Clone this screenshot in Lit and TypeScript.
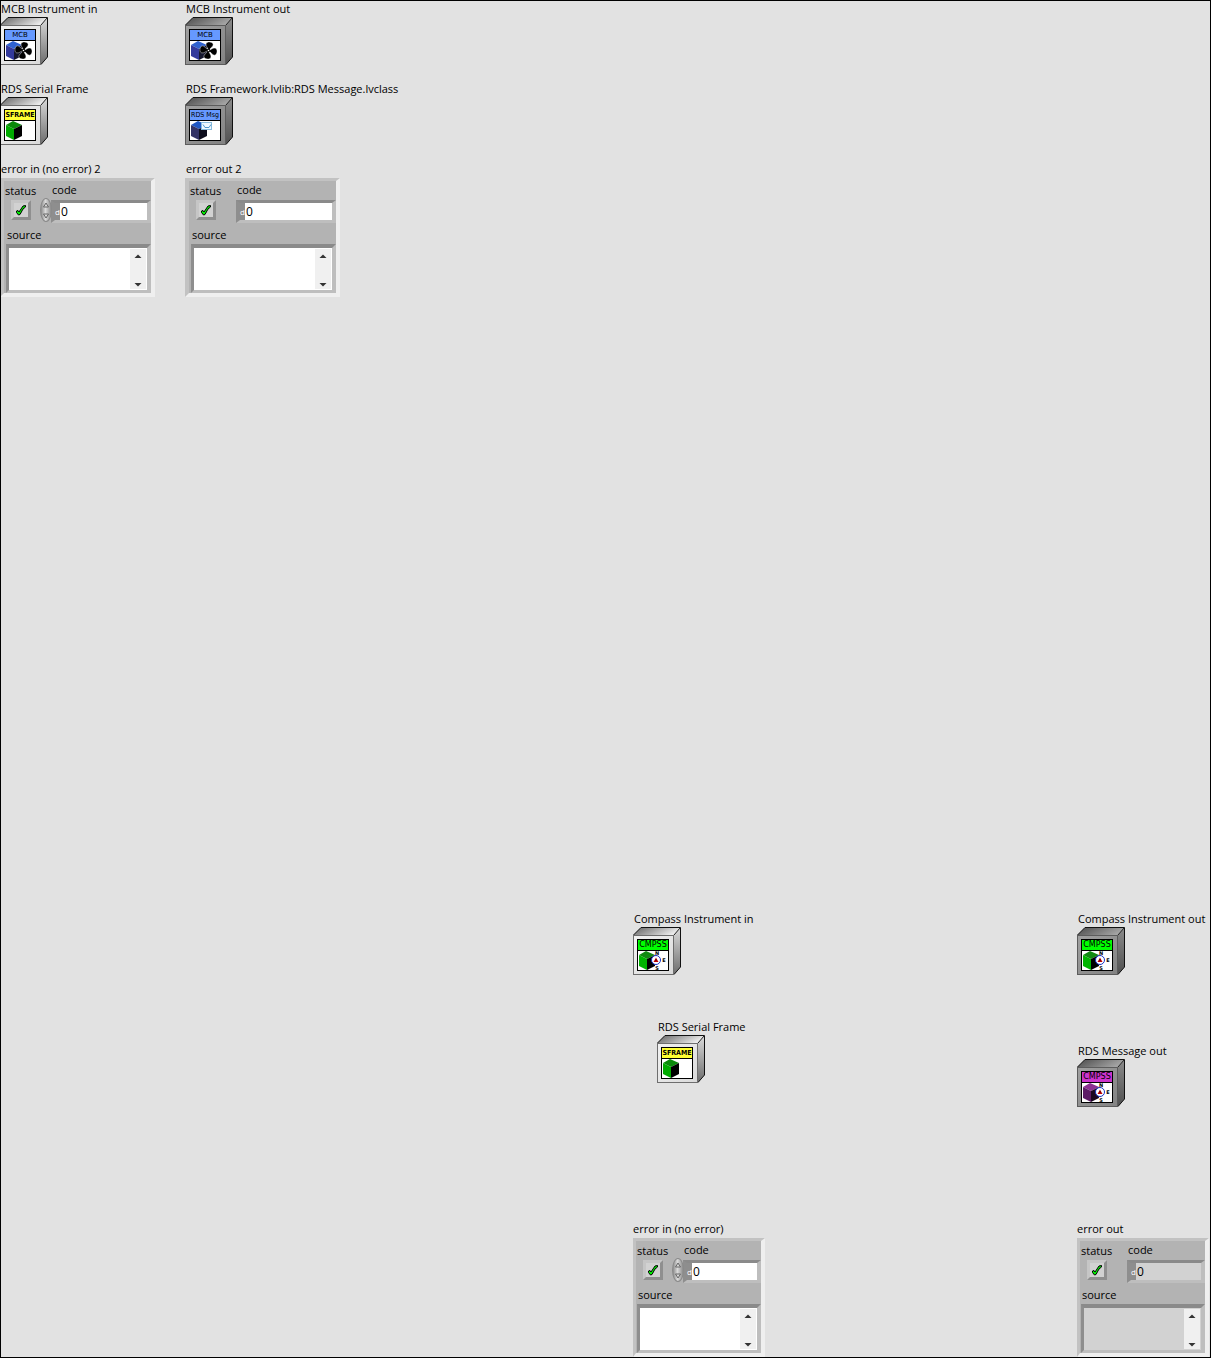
import { LitElement, html, svg, css, nothing } from "lit";
import { customElement, property } from "lit/decorators.js";

type Emblem = "fan" | "mail" | "compass" | "none";

interface ClassKind {
  tag: string;
  font: string;
  header: string;
  top: string;
  left: string;
  right: string;
  emblem: Emblem;
}

const KINDS: Record<string, ClassKind> = {
  mcb: { tag: "MCB", font: "plain", header: "#6699ff", top: "#2f62d0", left: "#333a9c", right: "#15172e", emblem: "fan" },
  sframe: { tag: "SFRAME", font: "narrow heavy", header: "#ffff33", top: "#0b8a0b", left: "#00ab00", right: "#000000", emblem: "none" },
  message: { tag: "RDS Msg", font: "narrow", header: "#6699ff", top: "#1f57c4", left: "#333366", right: "#0d0d1c", emblem: "mail" },
  compass: { tag: "CMPSS", font: "wide", header: "#00ff00", top: "#128a12", left: "#00b400", right: "#000000", emblem: "compass" },
  reply: { tag: "CMPSS", font: "wide", header: "#cc33cc", top: "#8d2f93", left: "#5c1c66", right: "#1a0620", emblem: "compass" },
};

/** Isometric box holding a 32x32 class icon. */
@customElement("class-object")
export class ClassObject extends LitElement {
  @property() name = "";
  @property() kind = "mcb";
  @property({ type: Boolean }) indicator = false;

  static styles = css`
    :host { display: block; }
    .name { padding-left: 1px; height: 16px; line-height: 16px; white-space: nowrap; }
    .icon { display: block; width: 48px; height: 48px; }
    .tag { font-family: "DejaVu Sans", sans-serif; font-size: 7px; text-anchor: middle; }
    .narrow { font-family: "DejaVu Sans Condensed", "DejaVu Sans", sans-serif; }
    .wide { font-size: 8px; }
    .heavy { font-weight: bold; }
    .point { font-family: "DejaVu Sans", sans-serif; font-size: 5px; font-weight: bold; text-anchor: middle; }
  `;

  private emblem(e: Emblem) {
    if (e === "fan") {
      return svg`
        ${[10, 100, 190, 280].map(a => svg`
          <path transform="rotate(${a} 23.500 33.500)" fill="#000" stroke="#fff" stroke-width="0.400"
            d="M23.500 33.500C22.500 31 19.500 29.500 20 27C20.500 24.500 26 24 27 26.500C27.500 29 25 30.500 23.500 33.500Z"/>`)}
        <circle cx="23.500" cy="33.500" r="1.800" fill="#000"/>
        <circle cx="23.500" cy="33.500" r="0.800" fill="#fff"/>`;
    }
    if (e === "mail") {
      return svg`
        <rect x="16.500" y="25.500" width="10" height="7" fill="#eef8ff" stroke="#88bbdd"/>
        <path d="M18 27.500L20 30.500H24L26 27.500" fill="none" stroke="#4f95c8"/>`;
    }
    if (e === "compass") {
      return svg`
        <circle cx="23" cy="33" r="4.500" fill="#fff" stroke="#1230c8"/>
        <path d="M23 30.500L25.500 35H20.500Z" fill="#c00000"/>
        <path d="M23 32V34" stroke="#500"/>
        <text class="point" x="24" y="28">N</text>
        <text class="point" x="31" y="35">E</text>
        <text class="point" x="24" y="43">S</text>`;
    }
    return nothing;
  }

  render() {
    const k = KINDS[this.kind];
    const face = this.indicator ? ["#a0a0a0", "#828282"] : ["#f2f2f2", "#dadada"];
    const edge = this.indicator ? "#5c5c5c" : "#6e6e6e";
    return html`
      <div class="name">${this.name}</div>
      <svg class="icon" viewBox="0 0 48 48" role="img" aria-label=${this.name}>
        <defs>
          <linearGradient id="roof" x1="0" y1="0" x2="1" y2="0.300">
            <stop offset="0" stop-color=${this.indicator ? "#4a4a4a" : "#606060"}/>
            <stop offset="1" stop-color=${this.indicator ? "#a4a4a4" : "#ececec"}/>
          </linearGradient>
          <linearGradient id="side" x1="0" y1="0" x2="0" y2="1">
            <stop offset="0" stop-color=${this.indicator ? "#8c8c8c" : "#dcdcdc"}/>
            <stop offset="1" stop-color=${this.indicator ? "#505050" : "#6c6c6c"}/>
          </linearGradient>
          <linearGradient id="face" x1="0" y1="0" x2="1" y2="1">
            <stop offset="0" stop-color=${face[0]}/>
            <stop offset="1" stop-color=${face[1]}/>
          </linearGradient>
        </defs>
        <path d="M0.500 8L8 0.500H47.500L41 8Z" fill="url(#roof)"/>
        <path d="M41 8L47.500 0.500V40L41 47.500Z" fill="url(#side)"/>
        <path d="M0.500 8L8 0.500H47.500V40L41 47.500" fill="none" stroke="#111"/>
        <rect x="0.500" y="8.500" width="40" height="39" fill="url(#face)" stroke=${edge}/>
        <path d="M41 8L47 1" stroke="#222"/>
        <rect x="4.500" y="12.500" width="31" height="31" fill="#fff" stroke="#000"/>
        <rect x="5" y="13" width="30" height="10" fill=${k.header}/>
        <rect x="5" y="23" width="30" height="1" fill="#000"/>
        <text class="tag ${k.font}" x="20" y="20">${k.tag}</text>
        <path d="M13 24L22 28L14 32L6 28Z" fill=${k.top}/>
        <path d="M6 28L14 32V43L6 39Z" fill=${k.left}/>
        <path d="M14 32L22 28V39L14 43Z" fill=${k.right}/>
        ${this.emblem(k.emblem)}
      </svg>
    `;
  }
}

/** Error cluster with status, code and source fields. */
@customElement("error-cluster")
export class ErrorCluster extends LitElement {
  @property() name = "";
  @property({ type: Boolean }) indicator = false;
  @property({ type: Boolean }) dimmed = false;
  @property({ type: Boolean }) compact = false;

  static styles = css`
    :host { display: block; }
    * { box-sizing: border-box; }
    button, input, textarea { font: inherit; color: inherit; margin: 0; padding: 0; border: 0; border-radius: 0; outline: 0; background: none; }
    .name { padding-left: 1px; height: 16px; line-height: 16px; white-space: nowrap; margin-bottom: 1px; }
    .cluster {
      display: flex; flex-direction: column; background: #b3b3b3; padding-top: 1px;
      border-style: solid; border-width: 3px 4px 4px 4px;
      border-color: #c2c2c2 #efefef #efefef #c2c2c2;
    }
    .fields { display: grid; grid-template-columns: 47px minmax(0, 1fr); grid-template-rows: 17px 23px; row-gap: 1px; }
    label { line-height: 16px; }
    .status-label { align-self: end; padding-left: 1px; }
    .code-label { align-self: start; padding-left: 1px; }
    .status { display: flex; justify-content: space-between; padding-left: 7px; }
    .led {
      width: 20px; height: 20px; background: #d2d2d2;
      border: 3px solid; border-color: #c6c6c6 #8f8f8f #8f8f8f #c6c6c6;
    }
    .led svg { display: block; width: 14px; height: 14px; }
    .spin {
      position: relative; display: flex; flex-direction: column; width: 12px; height: 24px;
      margin: -2px -1px 0 0; border: 1px solid #8a8a8a; border-radius: 50%;
      background: linear-gradient(90deg, #8c8c8c, #dadada 45%, #8c8c8c);
    }
    .spin button { flex: 1; display: grid; place-items: center; }
    .spin svg { display: block; width: 8px; height: 8px; }
    .well { border-style: solid; border-color: #8a8a8a #bebebe #bebebe #8e8e8e; display: flex; background: #fff; }
    .dimmed { background: #d2d2d2; }
    .code { border-width: 3px 4px; font-size: 12px; }
    .radix { width: 5px; background: #8e8e8e; color: #fff; font-size: 8px; line-height: 17px; }
    .code input { flex: 1; min-width: 0; height: 17px; line-height: 17px; padding-left: 1px; }
    .source-label { margin: 4px 0 1px 3px; }
    .source { margin-left: 2px; height: 49px; border-width: 4px 4px 3px 3px; }
    textarea { flex: 1; min-width: 0; resize: none; overflow: hidden; }
    .bar { width: 16px; margin: 1px; padding-top: 3px; background: #f0f0f0; display: flex; flex-direction: column; justify-content: space-between; }
    .bar button { height: 8px; display: grid; place-items: center; }
    .bar svg { display: block; width: 8px; height: 4px; }
    :host([compact]) .name { padding-left: 0; }
    :host([compact]) .cluster { border-left-width: 3px; }
    :host([compact]) .source { margin-left: 1px; }
    :host([compact]) .source-label { margin-left: 2px; }
  `;

  render() {
    const well = this.dimmed ? "well dimmed" : "well";
    return html`
      <div class="name">${this.name}</div>
      <div class="cluster" role="group" aria-label=${this.name}>
        <div class="fields">
          <label class="status-label" for="status">status</label>
          <label class="code-label" for="code">code</label>
          <div class="status">
            <button id="status" class="led">
              <svg viewBox="0 0 14 14">
                <path d="M2.500 8L4 7.500L5 9L9 3L11.500 2.500V4L9 6L6 11.500L4.500 12L2.500 9.500Z" fill="#00f000" stroke="#000" stroke-linejoin="round"/>
              </svg>
            </button>
            ${this.indicator ? nothing : html`
              <div class="spin">
                <button aria-label="Increase code"><svg viewBox="0 0 8 8"><path d="M1.500 6L4 2L6.500 6Z" fill="#d8d8d8" stroke="#666"/></svg></button>
                <button aria-label="Decrease code"><svg viewBox="0 0 8 8"><path d="M1.500 2L4 6L6.500 2Z" fill="#d8d8d8" stroke="#666"/></svg></button>
              </div>`}
          </div>
          <div class="code ${well}">
            <span class="radix">d</span>
            <input id="code" type="text" .value=${"0"} ?readonly=${this.indicator}>
          </div>
        </div>
        <label class="source-label" for="source">source</label>
        <div class="source ${well}">
          <textarea id="source" ?readonly=${this.indicator}></textarea>
          <div class="bar">
            <button aria-label="Scroll up"><svg viewBox="0 0 8 4"><path d="M0.500 4L4 0.500L7.500 4Z" fill="#333"/></svg></button>
            <button aria-label="Scroll down"><svg viewBox="0 0 8 4"><path d="M0.500 0L4 3.500L7.500 0Z" fill="#333"/></svg></button>
          </div>
        </div>
      </div>
    `;
  }
}

@customElement("app-root")
export class AppRoot extends LitElement {
  static styles = css`
    :host {
      display: flex; flex-direction: column; justify-content: space-between;
      position: relative; box-sizing: border-box; min-height: 100vh; padding: 1px 2px 1px 0;
      background: #e2e2e2; color: #000; overflow: hidden;
      font-family: "Open Sans", "Noto Sans", sans-serif; font-size: 11px;
    }
    :host::after { content: ""; position: absolute; inset: 0; border: 1px solid #000; pointer-events: none; }
    .row { display: flex; }
    .upper { gap: 30px; }
    .lower { gap: 312px; justify-content: flex-end; }
    .column { display: flex; flex-direction: column; }
    .upper .column { width: 155px; gap: 16px; }
    .lower .column { width: 132px; }
    .frame { margin: 44px 0 0 24px; }
    .reply { margin-top: 68px; }
    .last { margin-top: auto; }
    .frame + .last { padding-top: 138px; }
  `;

  render() {
    return html`
      <section class="row upper">
        <div class="column">
          <class-object name="MCB Instrument in" kind="mcb"></class-object>
          <class-object name="RDS Serial Frame" kind="sframe"></class-object>
          <error-cluster name="error in (no error) 2"></error-cluster>
        </div>
        <div class="column">
          <class-object name="MCB Instrument out" kind="mcb" indicator></class-object>
          <class-object name="RDS Framework.lvlib:RDS Message.lvclass" kind="message" indicator></class-object>
          <error-cluster name="error out 2" indicator></error-cluster>
        </div>
      </section>
      <section class="row lower">
        <div class="column">
          <class-object name="Compass Instrument in" kind="compass"></class-object>
          <class-object class="frame" name="RDS Serial Frame" kind="sframe"></class-object>
          <error-cluster class="last" name="error in (no error)" compact></error-cluster>
        </div>
        <div class="column">
          <class-object name="Compass Instrument out" kind="compass" indicator></class-object>
          <class-object class="reply" name="RDS Message out" kind="reply" indicator></class-object>
          <error-cluster class="last" name="error out" indicator dimmed compact></error-cluster>
        </div>
      </section>
    `;
  }
}
